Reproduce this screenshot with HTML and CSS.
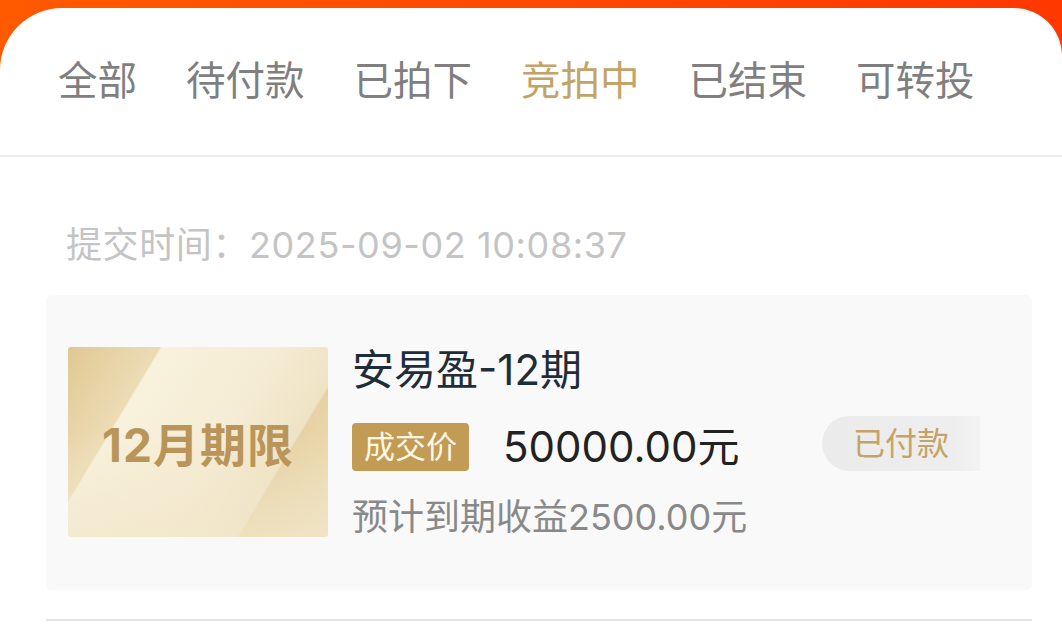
FILE: index.html
```html
<!DOCTYPE html>
<html lang="zh-CN">
<head>
<meta charset="UTF-8" />
<meta name="viewport" content="width=device-width, initial-scale=1" />
<title>我的竞拍</title>
<link rel="stylesheet" href="styles.css">
</head>
<body>

<div class="sheet">
  <nav class="tabs">
    <a href="#" class="tab">全部</a>
    <a href="#" class="tab">待付款</a>
    <a href="#" class="tab">已拍下</a>
    <a href="#" class="tab active">竞拍中</a>
    <a href="#" class="tab">已结束</a>
    <a href="#" class="tab">可转投</a>
  </nav>

  <section class="list">
    <p class="submit-time">提交时间：2025-09-02 10:08:37</p>

    <div class="order-card">
      <div class="cover">12月期限</div>
      <div class="info">
        <h3 class="title">安易盈-12期</h3>
        <div class="price-row">
          <span class="badge">成交价</span>
          <span class="price">50000.00元</span>
        </div>
        <p class="income">预计到期收益2500.00元</p>
      </div>
      <span class="status">已付款</span>
    </div>

    <div class="divider"></div>
  </section>
</div>

</body>
</html>
```

FILE: styles.css
```css
:root {
  --orange-l: #ff5a00;
  --orange-r: #ff3800;
  --gold: #c29b55;
  --gold-text: #c4a466;
  --gray-tab: #7f7f7f;
}
html, body {
  margin: 0; padding: 0;
  height: 100%;
}
body {
  font-family: Inter, 'Noto Sans CJK SC', sans-serif;
  background: linear-gradient(to right, var(--orange-l), var(--orange-r));
  overflow: hidden;
}
.sheet {
  margin-top: 8px;
  min-height: 640px;
  background: #fff;
  border-radius: 62px 48px 0 0;
}
.tabs {
  height: 147px;
  display: flex;
  align-items: center;
  gap: 49px;
  padding-left: 58px;
  border-bottom: 2px solid #ececec;
}
.tab {
  font-size: 39.5px;
  color: var(--gray-tab);
  text-decoration: none;
  line-height: 1;
}
.tab.active {
  color: var(--gold-text);
}
.list {
  padding: 0 30px 0 46px;
}
.submit-time {
  margin: 63px 0 0 20px;
  font-size: 36px;
  line-height: 50px;
  letter-spacing: 0.6px;
  color: #c4c4c4;
}
.order-card {
  margin-top: 25px;
  background: #f9f9f9;
  border-radius: 6px;
  padding: 52px 0 51px 22px;
  display: flex;
  align-items: flex-start;
}
.cover {
  width: 260px;
  height: 190px;
  flex-shrink: 0;
  border-radius: 3px;
  display: flex;
  align-items: center;
  justify-content: center;
  font-size: 46px;
  font-weight: 700;
  letter-spacing: 1px;
  color: #b9955a;
  background:
    linear-gradient(to bottom, rgba(244,234,208,0) 45%, rgba(242,231,203,0.7) 100%),
    linear-gradient(121deg, #e0c893 0%, #ecdcb5 24.6%, #f8f1dc 25.2%, #f5ecd4 55%, #efe3c4 75.6%, #e6d2a4 76.2%, #ecdeb8 100%);
}
.info {
  flex: 1;
  margin-left: 24px;
}
.title {
  margin: 0;
  font-size: 42px;
  font-weight: 400;
  line-height: 46px;
  color: #1f2d3a;
}
.price-row {
  margin-top: 30px;
  height: 48px;
  display: flex;
  align-items: center;
}
.badge {
  height: 48px;
  padding: 0 12px;
  border-radius: 4px;
  background: var(--gold);
  color: #fff7e6;
  font-size: 31px;
  line-height: 48px;
}
.price {
  margin-left: 34px;
  font-size: 42px;
  line-height: 48px;
  color: #222;
}
.income {
  margin: 24px 0 0;
  font-size: 36px;
  line-height: 44px;
  color: #898989;
}
.status {
  align-self: center;
  margin-right: 52px;
  width: 158px;
  height: 55px;
  border-radius: 28px 0 0 28px;
  background: linear-gradient(to right, #ebebeb, #eeeeee 85%, #f3f3f3);
  color: var(--gold-text);
  font-size: 32px;
  line-height: 55px;
  text-align: center;
}
.divider {
  margin-top: 29px;
  height: 2px;
  background: #e4e4e4;
}
```
